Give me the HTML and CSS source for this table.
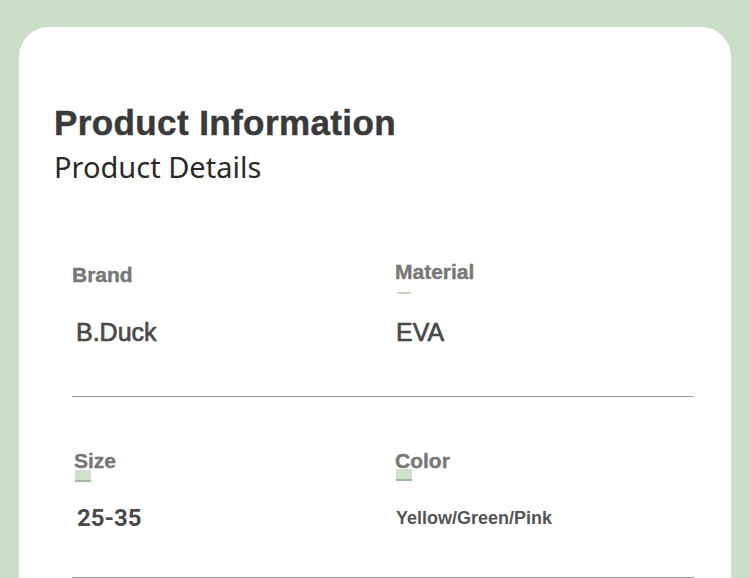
FILE: index.html
```html
<!DOCTYPE html>
<html lang="en">
<head>
    <meta charset="UTF-8">
    <meta name="viewport" content="width=device-width, initial-scale=1.0">
    <title>Product Information</title>
    <link rel="stylesheet" href="styles.css">
</head>
<body>
    <div class="card">
        <div class="card-header">
            <h1 class="title">Product Information</h1>
            <p class="subtitle">Product Details</p>
        </div>

        <div class="spec-list">
            <div class="spec-row">
                <div class="spec-item">
                    <div class="spec-label">Brand</div>
                    <div class="spec-value">B.Duck</div>
                </div>
                <div class="spec-item">
                    <div class="spec-label label-raised">Material<span class="mark mark-line"></span></div>
                    <div class="spec-value value-right">EVA</div>
                </div>
            </div>
            <div class="spec-row">
                <div class="spec-item">
                    <div class="spec-label label-size">Size<span class="mark"></span></div>
                    <div class="spec-value value-num">25-35</div>
                </div>
                <div class="spec-item">
                    <div class="spec-label">Color<span class="mark"></span></div>
                    <div class="spec-value value-small">Yellow/Green/Pink</div>
                </div>
            </div>
        </div>
    </div>
</body>
</html>
```

FILE: styles.css
```css
body {
    margin: 0;
    background: #cbdfc8;
    font-family: "Liberation Sans", Arial, sans-serif;
    overflow: hidden;
}
.card {
    margin: 27px 19px 0;
    background: #ffffff;
    border-radius: 30px 30px 0 0;
    padding: 76px 37px 40px 35px;
    min-height: 600px;
}
.card-header {
    margin-bottom: 76px;
}
.title {
    margin: 0;
    font-size: 35px;
    line-height: 40px;
    font-weight: bold;
    color: #3a3a3a;
    letter-spacing: 0.4px;
    -webkit-text-stroke: 0.5px #3a3a3a;
}
.subtitle {
    margin: 6px 0 0;
    font-family: "Noto Sans", sans-serif;
    font-size: 29px;
    line-height: 36px;
    color: #2a2a2a;
}
.spec-list {
    margin-left: 18px;
}
.spec-row {
    display: grid;
    grid-template-columns: 323px 1fr;
    padding: 0 0 49px;
    border-bottom: 1px solid #9c9c9c;
}
.spec-row + .spec-row {
    padding-top: 50px;
    padding-bottom: 44px;
}
.spec-item {
    display: flex;
    flex-direction: column;
    gap: 28px;
}
.spec-label {
    position: relative;
    font-size: 21px;
    line-height: 28px;
    font-weight: bold;
    color: #777777;
    -webkit-text-stroke: 0.4px #777777;
}
.label-raised {
    margin-top: -3px;
    margin-bottom: 3px;
}
.label-size {
    padding-left: 2px;
}
.mark {
    position: absolute;
    left: 1px;
    top: 22px;
    width: 16px;
    height: 10px;
    background: #cfe0cc;
    border-bottom: 2px solid #9fba9b;
}
.label-size .mark {
    left: 3px;
    top: 23px;
}
.mark-line {
    left: 2px;
    top: 34px;
    width: 14px;
    height: 0;
    background: none;
    border-bottom: 2px solid #c3d6c0;
}
.spec-value {
    padding-left: 4px;
    font-size: 25px;
    line-height: 30px;
    color: #4a4a4a;
    -webkit-text-stroke: 0.7px #4a4a4a;
}
.value-right {
    padding-left: 1px;
}
.value-num {
    padding-left: 5px;
    font-family: "Roboto", sans-serif;
    font-size: 24px;
    font-weight: bold;
    -webkit-text-stroke: 0;
}
.value-small {
    padding-left: 1px;
    font-size: 18px;
    font-weight: bold;
    color: #555555;
    -webkit-text-stroke: 0;
}
```
